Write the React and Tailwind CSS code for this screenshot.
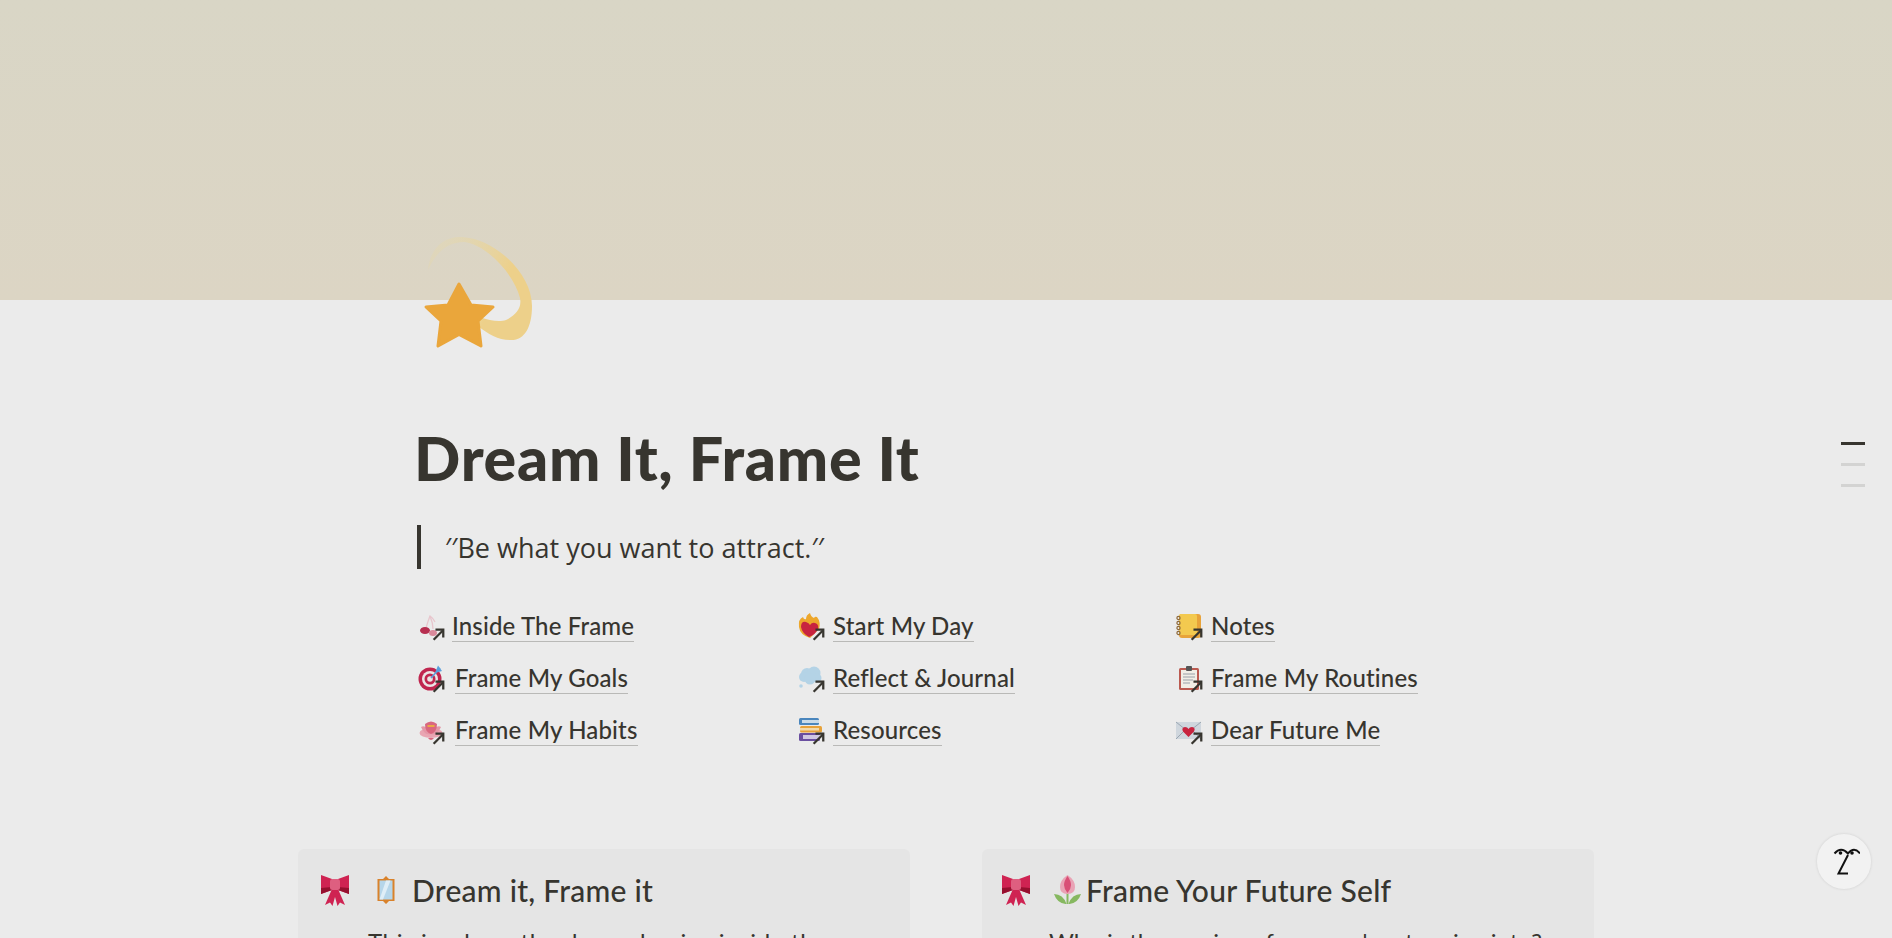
const arrow = (
    <svg viewBox="0 0 12 12" className="absolute right-[-1px] bottom-[-2px] w-[13px] h-[13px]" fill="none" stroke="#37352f" strokeWidth="2.1">
        <path d="M1.5 10.8 10 2.3" />
        <path d="M3.2 1.600h7.2v7.2" />
    </svg>
);

function Cherries() {
    return (
        <svg viewBox="0 0 26 26" className="w-[26px] h-[26px]">
            <path d="M8 15 Q10 8 12 3 Q15 5 17 9" fill="none" stroke="#e8c6cd" strokeWidth="1.3" />
            <path d="M12 3 Q15 10 15 16" fill="none" stroke="#e8c6cd" strokeWidth="1.3" />
            <ellipse cx="7" cy="17.5" rx="5" ry="3.5" fill="#b72f50" />
            <ellipse cx="15" cy="20" rx="4" ry="3" fill="#d98a9b" />
        </svg>
    );
}

function Target() {
    return (
        <svg viewBox="0 0 26 26" className="w-[26px] h-[26px]">
            <circle cx="12" cy="14" r="11.5" fill="#c0264f" />
            <circle cx="12" cy="14" r="8" fill="#ebe6e6" />
            <circle cx="12" cy="14" r="5.5" fill="#c0264f" />
            <circle cx="12" cy="14" r="2.8" fill="#ebe6e6" />
            <path d="M13 13 22 3" stroke="#5a9fdc" strokeWidth="1.6" />
            <path d="M17 8 20 0.5 24 6Z" fill="#5a9fdc" />
        </svg>
    );
}

function Lotus() {
    return (
        <svg viewBox="0 0 26 26" className="w-[26px] h-[26px]">
            <ellipse cx="13" cy="16" rx="11.500" ry="5" fill="#e9a5b2" />
            <path d="M3 10 Q8 7 13 17 Q7 19 3 10Z" fill="#e496a6" />
            <path d="M23 10 Q18 7 13 17 Q19 19 23 10Z" fill="#e496a6" />
            <path d="M7 7 Q13 2 19 7 Q19 15 13 17 Q7 15 7 7Z" fill="#d9677f" />
            <path d="M9.500 9h7" stroke="#edb33f" strokeWidth="1.800" />
            <path d="M10 21 Q13 25 16 21" fill="#d9677f" />
        </svg>
    );
}

function FireHeart() {
    return (
        <svg viewBox="0 0 26 26" className="w-[26px] h-[26px]">
            <path d="M1 14 Q0 6 5 4 Q6 7 8 6 Q8 2 12 0 Q13 4 16 5 Q17 3 19 4 Q23 9 21 16 L12 25 Q2 22 1 14Z" fill="#eda72c" />
            <path d="M3 14 Q3 8 8 9 Q11 10 12 12 Q14 9 17 10 Q21 11 20 16 Q18 21 11 24 Q4 20 3 14Z" fill="#c8243f" />
        </svg>
    );
}

function Cloud() {
    return (
        <svg viewBox="0 0 26 26" className="w-[26px] h-[26px]" fill="#b4d3e6">
            <circle cx="9" cy="9" r="6" />
            <circle cx="16" cy="8" r="6.500" />
            <circle cx="6" cy="12" r="5" />
            <circle cx="19" cy="13" r="4.500" />
            <circle cx="12" cy="14" r="5.500" />
            <circle cx="3" cy="21" r="1.800" />
        </svg>
    );
}

function Books() {
    return (
        <svg viewBox="0 0 26 26" className="w-[26px] h-[26px]">
            <rect x="1" y="1" width="20" height="7" rx="1.500" fill="#4a86bd" />
            <rect x="4" y="3" width="17" height="3" fill="#c9dbe9" />
            <rect x="2" y="9" width="22" height="6.500" rx="1.500" fill="#e7a23a" />
            <rect x="2" y="11" width="19" height="2.500" fill="#f1d9ab" />
            <rect x="1" y="16" width="21" height="8" rx="1.500" fill="#6a4fa0" />
            <rect x="5" y="18" width="17" height="4" fill="#cfc7e2" />
        </svg>
    );
}

function Notebook() {
    return (
        <svg viewBox="0 0 26 26" className="w-[26px] h-[26px]">
            <rect x="3" y="1" width="22" height="24" rx="3" fill="#e8a33a" />
            <rect x="3" y="1" width="18" height="21" rx="2" fill="#f3c94f" />
            <g fill="none" stroke="#8f6a3a" strokeWidth="1.200">
                <circle cx="2.500" cy="5" r="1.600" />
                <circle cx="2.500" cy="10" r="1.600" />
                <circle cx="2.500" cy="15" r="1.600" />
                <circle cx="2.500" cy="20" r="1.600" />
            </g>
        </svg>
    );
}

function Clipboard() {
    return (
        <svg viewBox="0 0 26 26" className="w-[26px] h-[26px]">
            <rect x="3" y="3" width="20" height="22" rx="1.500" fill="#bb5a50" />
            <rect x="5" y="5" width="16" height="18" fill="#f1eee6" />
            <rect x="10" y="1" width="6" height="5" rx="1" fill="#555" />
            <path d="M7 9h12M7 12h12M7 15h10M7 18h7" stroke="#9aa0a8" strokeWidth="1" />
        </svg>
    );
}

function LoveLetter() {
    return (
        <svg viewBox="0 0 26 26" className="w-[26px] h-[26px]">
            <rect x="0" y="5" width="25" height="17" rx="1" fill="#cfd6dd" />
            <path d="M0 5 12.500 15 25 5M0 22l9-9M25 22l-9-9" fill="none" stroke="#9aa6b1" strokeWidth="1" />
            <path d="M12.500 20 7 14.500Q5 10.500 9 10Q11.500 10 12.500 12Q13.500 10 16 10Q20 10.500 18 14.500Z" fill="#c8243f" />
        </svg>
    );
}

function Bow() {
    return (
        <svg viewBox="0 0 28 31" className="w-[28px] h-[31px] shrink-0">
            <path d="M11 14 4 30 9 27.500 11.500 31 14 22 16.500 31 19 27.500 24 30 17 14Z" fill="#cf2352" />
            <path d="M0 0 11 4V15L0 19Z" fill="#cf2352" />
            <path d="M28 0 17 4V15L28 19Z" fill="#cf2352" />
            <path d="M0 13 11 12V15L0 19ZM28 13 17 12V15L28 19Z" fill="#96102f" />
            <rect x="9" y="4" width="10" height="11" rx="2.500" fill="#de5f80" />
        </svg>
    );
}

function Mirror() {
    return (
        <svg viewBox="0 0 20 28" className="w-[20px] h-[28px] shrink-0">
            <path d="M10 0 13 3H18.500V25H13L10 28 7 25H1.500V3H7Z" fill="#d9822b" />
            <rect x="3.500" y="4.500" width="13" height="19" fill="#b6d6ea" />
            <path d="M10 4.500h4.500L7 23.500H3.500Z" fill="#dfeef7" />
        </svg>
    );
}

function Tulip() {
    return (
        <svg viewBox="0 0 27 30" className="w-[27px] h-[30px] shrink-0">
            <path d="M0 19Q9 19 12.500 29H11.500Q3 28 0 19ZM27 19Q18 19 14.500 29H15.500Q24 28 27 19Z" fill="#86b860" />
            <path d="M13.500 18V29" stroke="#86b860" strokeWidth="2" />
            <path d="M13.500 0Q21 5 21 12Q21 19 13.500 19Q6 19 6 12Q6 5 13.500 0Z" fill="#e9a3b5" />
            <path d="M13.500 1Q17 6 17 10Q17 14 13.500 18Q10 14 10 10Q10 6 13.500 1Z" fill="#d94f76" />
        </svg>
    );
}

const rows = [
    [
        { label: 'Inside The Frame', icon: Cherries, gap: 'ml-[8px]', inset: 'ml-[6px]' },
        { label: 'Frame My Goals', icon: Target, gap: 'ml-[11px]', inset: 'ml-[6px]' },
        { label: 'Frame My Habits', icon: Lotus, gap: 'ml-[11px]', inset: 'ml-[6px]' },
    ],
    [
        { label: 'Start My Day', icon: FireHeart, gap: 'ml-[9px]', inset: 'ml-[8px]' },
        { label: 'Reflect & Journal', icon: Cloud, gap: 'ml-[9px]', inset: 'ml-[8px]' },
        { label: 'Resources', icon: Books, gap: 'ml-[9px]', inset: 'ml-[8px]' },
    ],
    [
        { label: 'Notes', icon: Notebook, gap: 'ml-[9px]', inset: 'ml-[8px]' },
        { label: 'Frame My Routines', icon: Clipboard, gap: 'ml-[9px]', inset: 'ml-[8px]' },
        { label: 'Dear Future Me', icon: LoveLetter, gap: 'ml-[9px]', inset: 'ml-[8px]' },
    ],
];

function PageLink({ label, icon: IconComp, gap, inset }) {
    return (
        <div className="flex items-center h-[52px]">
            <span className={`relative w-[26px] h-[26px] shrink-0 ${inset}`}>
                <IconComp />
                {arrow}
            </span>
            <span className={`${gap} text-[24px] leading-[30px] tracking-[0.15px] font-medium text-[#37352f] border-b border-[#b9b9b7]`}>
                {label}
            </span>
        </div>
    );
}

function Card({ title, body, bodyClass, icon: IconComp, padding, iconGap, titleGap }) {
    return (
        <div className={`w-[612px] h-[300px] bg-[#e5e5e5] rounded-md pt-[24px] ${padding}`}>
            <div className="flex items-center">
                <Bow />
                <span className={iconGap}><IconComp /></span>
                <h3 className={`${titleGap} text-[30px] leading-[34px] tracking-[0.25px] font-medium text-[#37352f]`}>{title}</h3>
            </div>
            <p className={`ml-[47px] mt-[19px] text-[24px] leading-[32px] font-normal text-[#37352f] ${bodyClass}`}>{body}</p>
        </div>
    );
}

export default function App() {
    return (
        <div className="relative h-[938px] overflow-hidden bg-[#ebebeb] font-['Lato',sans-serif]">
            <div className="h-[300px] bg-gradient-to-b from-[#d9d6c6] to-[#dcd5c4]" />

            <div className="w-[1068px] ml-[412px]">
                <div className="-mt-[70px] h-[193px]">
                    <svg viewBox="0 0 130 130" className="w-[130px] h-[130px]">
                        <defs>
                            <linearGradient id="swoosh" x1="0.1" y1="0.2" x2="0.7" y2="0.5">
                                <stop offset="0" stopColor="#e6d8a8" stopOpacity="0.35" />
                                <stop offset="1" stopColor="#edd08a" />
                            </linearGradient>
                        </defs>
                        <path d="M16 40C18 18 32 6 50 7C84 9 120 44 120 76C120 98 112 111 98 110C86 110 76 104 66 96L68 87C78 91 88 92 94 90C104 85 110 78 108 68C102 44 74 14 52 12C36 12 24 22 16 40Z" fill="url(#swoosh)" />
                        <path d="M47 54 59 75 81 77 66 91 69 116 47 104.500 26 116 29 91 14 77 36 75Z" fill="#eaa63b" stroke="#eaa63b" strokeWidth="3" strokeLinejoin="round" />
                    </svg>
                </div>

                <h1 className="ml-[2px] text-[61px] leading-[70px] font-black text-[#37352f] tracking-[0.7px]">Dream It, Frame It</h1>

                <blockquote className="ml-[5px] mt-[32px] h-[44px] border-l-[4px] border-[#37352f] pl-[24px] font-['Open_Sans',sans-serif] font-normal text-[27px] leading-[45px] text-[#37352f]">
                    ′′Be what you want to attract.′′
                </blockquote>

                <div className="mt-[31px] grid grid-cols-[378px_378px_312px]">
                    {rows.map((col, i) => (
                        <div key={i}>
                            {col.map((item) => (
                                <PageLink key={item.label} {...item} />
                            ))}
                        </div>
                    ))}
                </div>
            </div>

            <div className="mt-[93px] ml-[298px] flex gap-[72px]">
                <Card
                    title="Dream it, Frame it"
                    body="This is where the dream begins inside the"
                    bodyClass="tracking-[0.65px]"
                    icon={Mirror}
                    padding="pl-[23px]"
                    iconGap="ml-[27px]"
                    titleGap="ml-[16px]"
                />
                <Card
                    title="Frame Your Future Self"
                    body="Who is the version of you you're stepping into?"
                    bodyClass="tracking-normal"
                    icon={Tulip}
                    padding="pl-[20px]"
                    iconGap="ml-[24px]"
                    titleGap="ml-[5px]"
                />
            </div>

            <div className="absolute left-[1841px] top-[442px] w-[24px]">
                <div className="h-[3px] bg-[#37352f]" />
                <div className="h-[3px] mt-[18px] bg-[#d3d3d2]" />
                <div className="h-[3px] mt-[18px] bg-[#d3d3d2]" />
            </div>

            <div className="absolute left-[1817px] top-[834px] w-[54px] h-[55px] rounded-full bg-[#f2f2f2] shadow-[0_0_3px_rgba(0,0,0,0.12)] flex items-center justify-center">
                <svg viewBox="0 0 32 30" className="w-[32px] h-[30px]" fill="none" stroke="#111" strokeWidth="2">
                    <path d="M6.500 6.500Q13 -1 20 6.500Q26 -1 32 6.500" />
                    <path d="M20 8 10.500 26.500H20" />
                    <circle cx="12.500" cy="6" r="1.800" fill="#111" stroke="none" />
                    <circle cx="24" cy="6" r="1.800" fill="#111" stroke="none" />
                </svg>
            </div>
        </div>
    );
}
